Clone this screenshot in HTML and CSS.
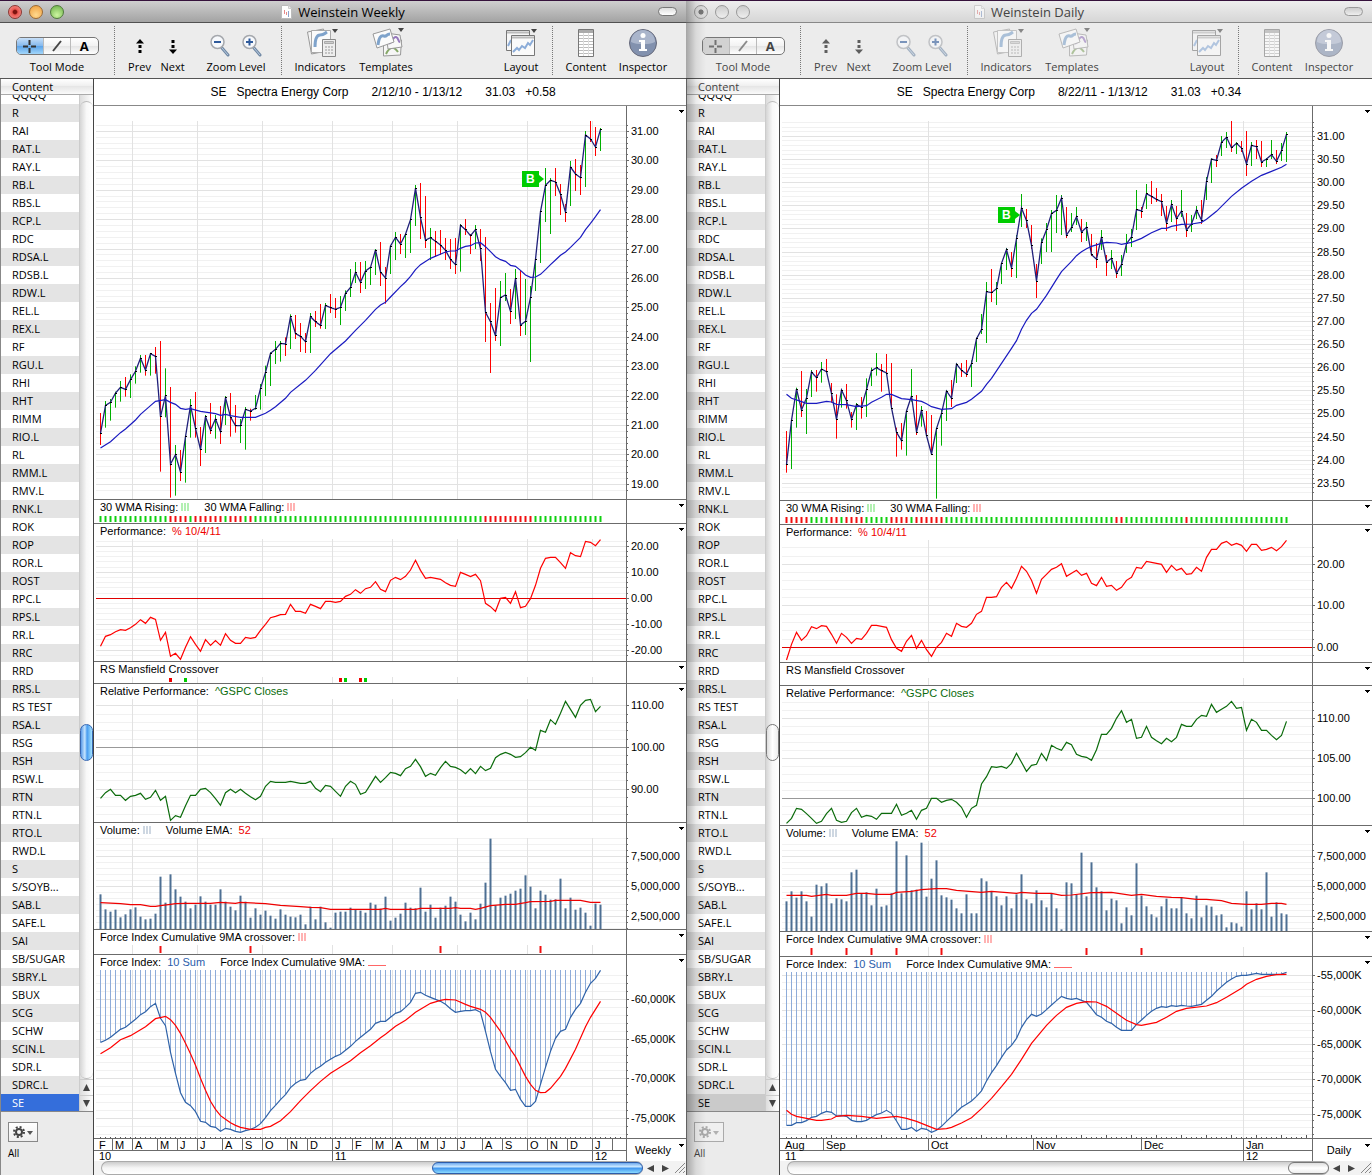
FILE: index.html
```html
<!DOCTYPE html>
<html lang="en">
  <head>
    <meta charset="UTF-8" />
    <title>Weinstein Charts</title>
    <link rel="stylesheet" href="styles.css">
  </head>
  <body>
    <main class="desktop" id="desktop"></main>

    <template id="window-template">
      <section class="window">
        <header class="titlebar">
          <div class="lights">
            <button class="light close" aria-label="Close"></button>
            <button class="light minimize" aria-label="Minimize"></button>
            <button class="light maximize" aria-label="Zoom window"></button>
          </div>
          <h1 class="title">
            <svg width="11" height="14" viewBox="0 0 11 14"><path d="M.5 .5h7l3 3v10H.5z" fill="#fff" stroke="#bbb"/><path d="M7.500 .5v3h3" fill="#eee" stroke="#ccc"/><path d="M3.500 5v4M5.500 7v3" stroke="#e58a8a"/><path d="M7.500 6v6" stroke="#8aa2cc"/></svg>
            <span class="title-text"></span>
          </h1>
          <button class="pill" aria-label="Toggle toolbar"></button>
        </header>

        <nav class="toolbar">
          <div class="tool mode">
            <div class="icons segments">
              <button class="segment active" aria-label="Crosshair"><svg width="13" height="13" viewBox="0 0 13 13"><path d="M6.500 0v5M6.500 8v5M0 6.500h5M8 6.500h5" stroke="#333" stroke-width="2"/></svg></button>
              <button class="segment" aria-label="Line"><svg width="12" height="12" viewBox="0 0 12 12"><path d="M2 11L10 1" stroke="#444" stroke-width="2"/></svg></button>
              <button class="segment letter">A</button>
            </div>
            <span>Tool Mode</span>
          </div>
          <i class="divider"></i>
          <button class="tool prev">
            <span class="icons"><svg width="10" height="15" viewBox="0 0 10 15"><path d="M1 4.500L5 0l4 4.500z"/><path d="M3.500 6h3v3h-3zM3.500 11h3v3h-3z"/></svg></span>
            <span>Prev</span>
          </button>
          <button class="tool next">
            <span class="icons"><svg width="10" height="15" viewBox="0 0 10 15"><path d="M1 10.500L5 15l4-4.500z"/><path d="M3.500 1h3v3h-3zM3.500 6h3v3h-3z"/></svg></span>
            <span>Next</span>
          </button>
          <div class="tool zoom">
            <div class="icons">
              <button aria-label="Zoom out"><svg width="20" height="23" viewBox="0 0 20 23"><path d="M12 14l6 7" stroke="#7189a5" stroke-width="3" stroke-linecap="round"/><path d="M12 14l6 7" stroke="#b9cbe0"/><circle cx="7.500" cy="8" r="6.500" fill="#f7f9fc" stroke="#a5a8ad" stroke-width="1.500"/><path d="M4 8h7" stroke="#2f5b9c" stroke-width="2"/></svg></button>
              <button aria-label="Zoom in"><svg width="20" height="23" viewBox="0 0 20 23"><path d="M12 14l6 7" stroke="#7189a5" stroke-width="3" stroke-linecap="round"/><path d="M12 14l6 7" stroke="#b9cbe0"/><circle cx="7.500" cy="8" r="6.500" fill="#f7f9fc" stroke="#a5a8ad" stroke-width="1.500"/><path d="M4 8h7M7.500 4.500v7" stroke="#2f5b9c" stroke-width="2"/></svg></button>
            </div>
            <span>Zoom Level</span>
          </div>
          <i class="divider"></i>
          <button class="tool indicators">
            <span class="icons"><svg width="32" height="32" viewBox="0 0 32 32"><path d="M1.500 5l16-3 3 22-15 3z" fill="#f5f5f5" stroke="#999"/><path d="M5.500 3.500h19v22h-19z" fill="#fbfbfb" stroke="#aaa"/><path d="M9 20c0-6 1-12 5-12s4-1 7-3" fill="none" stroke="#7fa3cb" stroke-width="3"/><path d="M16.500 12.500h13v17h-13z" fill="#eee" stroke="#888"/><path d="M18.500 14.500h9v2h-9z" fill="#ccc" stroke="#aaa"/><path d="M19 20h8M19 23h8M19 26h8" stroke="#999" stroke-dasharray="2 1"/><path d="M26 2h6l-3 4z" fill="#444"/></svg></span>
            <span>Indicators</span>
          </button>
          <button class="tool templates">
            <span class="icons"><svg width="32" height="32" viewBox="0 0 32 32"><path d="M11.500 14l18-1-1 15-17 1z" fill="#f6f6f6" stroke="#999"/><path d="M14 27c4-8 8-8 12-2" fill="none" stroke="#86a867" stroke-width="2"/><path d="M14 6l14 2 2 12-14 2z" fill="#f8f8f8" stroke="#999"/><path d="M17 16c2 2 4-7 7-6s2 5 4 5" fill="none" stroke="#9678bd" stroke-width="2"/><path d="M1 7l17-5 4 13-17 6z" fill="#fbfbfb" stroke="#999"/><path d="M6 18c1-8 3-10 6-9s2-2 6-2" fill="none" stroke="#7fa3cb" stroke-width="3"/><path d="M26 1h6l-3 4z" fill="#444"/></svg></span>
            <span>Templates</span>
          </button>
          <i class="spacer"></i>
          <button class="tool layout">
            <span class="icons"><svg width="32" height="30" viewBox="0 0 32 30"><path d="M1.500 2.500h23v20h-23z" fill="#f7f7f7" stroke="#777"/><path d="M2 4.500h22" stroke="#bbb" stroke-width="2"/><path d="M3 18l3-6" stroke="#8bacd8" stroke-width="2"/><path d="M6.500 7.500h23v20h-23z" fill="#fafafa" stroke="#777"/><path d="M7 9.500h22" stroke="#bbb" stroke-width="2"/><path d="M8 24l4-4 2 2 3-4 3 2 3-5 2 2 3-5" fill="none" stroke="#8bacd8" stroke-width="2"/><path d="M26 1h6l-3 4z" fill="#444"/></svg></span>
            <span>Layout</span>
          </button>
          <i class="divider"></i>
          <button class="tool content">
            <span class="icons"><svg width="16" height="28" viewBox="0 0 16 28"><path d="M.5 .5h15v27H.5z" fill="#fff" stroke="#777"/><path d="M1 2.500h14" stroke="#aaa" stroke-width="3"/><path d="M1 6.500h14M1 9.500h14M1 12.500h14M1 15.500h14M1 18.500h14M1 21.500h14M1 24.500h14" stroke="#bbb"/><path d="M5.500 4v23M10.500 4v23" stroke="#ddd"/></svg></span>
            <span>Content</span>
          </button>
          <button class="tool inspector">
            <span class="icons"><svg width="30" height="30" viewBox="0 0 30 30"><circle cx="15" cy="15" r="13.500" fill="#8291ae" stroke="#66697a"/><path d="M3 14a12 12 0 0 1 24 0c-6 3-18 3-24 0z" fill="#aab5cb"/><circle cx="15" cy="7.500" r="2.500" fill="#fff"/><path d="M11 12h6v9h2v2h-8v-2h2v-7h-2z" fill="#fff"/></svg></span>
            <span>Inspector</span>
          </button>
        </nav>

        <div class="body">
          <aside class="sidebar">
            <div class="sidebar-header">Content</div>
            <div class="list-area">
              <div class="symbols"></div>
              <div class="vscroll">
                <div class="vtrack"><div class="vthumb"></div></div>
                <button class="arrow" aria-label="Scroll up"><svg width="7" height="7"><path d="M0 7L3.500 0 7 7z" fill="#444"/></svg></button>
                <button class="arrow" aria-label="Scroll down"><svg width="7" height="7"><path d="M0 0h7L3.500 7z" fill="#444"/></svg></button>
              </div>
            </div>
            <div class="sidebar-footer">
              <button class="gear" aria-label="Actions">
                <svg width="20" height="12" viewBox="0 0 20 12"><circle cx="6" cy="6" r="3" fill="none" stroke="#444" stroke-width="2"/><circle cx="6" cy="6" r="5" fill="none" stroke="#444" stroke-width="2" stroke-dasharray="2 1.930"/><path d="M14 5h6l-3 4z" fill="#555"/></svg>
              </button>
              <div class="all">All</div>
            </div>
          </aside>

          <div class="chart">
            <div class="quote"></div>
            <div class="panels"></div>
            <div class="dates">
              <div class="date-rows">
                <div class="months"></div>
                <div class="years"></div>
              </div>
              <button class="period">
                <span class="period-text"></span>
                <svg width="5" height="3"><path d="M0 0h5v1h-1v1h-1v1h-1v-1h-1v-1h-1z"/></svg>
              </button>
            </div>
            <div class="hscroll">
              <div class="htrack"><div class="hthumb"></div></div>
              <button class="arrow" aria-label="Scroll left"><svg width="7" height="7"><path d="M7 0v7L0 3.500z" fill="#444"/></svg></button>
              <button class="arrow" aria-label="Scroll right"><svg width="7" height="7"><path d="M0 0v7l7-3.500z" fill="#444"/></svg></button>
              <svg class="grip" width="13" height="13"><path d="M2 12L12 2M6 12l6-6M10 12l2-2" stroke="#888"/></svg>
            </div>
          </div>
        </div>
      </section>
    </template>

    <script src="data.js"></script>
    <script src="charts.js"></script>
  </body>
</html>
```

FILE: styles.css
```css
* {
  box-sizing: border-box;
}
body {
  margin: 0;
  background: #fff;
  font-family: "Open Sans", sans-serif;
  font-size: 11px;
  color: #000;
}
button {
  padding: 0;
  border: 0;
  background: none;
  font: inherit;
  color: inherit;
}
svg {
  display: block;
}
.desktop {
  display: grid;
  grid-template-columns: 1fr 1fr;
}
.window {
  position: relative;
  border-top: 1px solid #35113b;
  min-width: 0;
}

/* title bar */
.titlebar {
  display: flex;
  align-items: center;
  height: 22px;
  padding: 0 9px 0 8px;
  background: linear-gradient(#cfcfcf, #a3a3a3);
  border-bottom: 1px solid #515151;
}
.lights {
  display: flex;
  gap: 7px;
  width: 68px;
}
.light {
  width: 14px;
  height: 14px;
  border-radius: 50%;
  border: 1px solid #777;
}
.close {
  background: radial-gradient(circle, #7c1410 20%, #ea5650 35%, #f4a29c);
  border-color: #8b3632;
}
.minimize {
  background: radial-gradient(circle at 50% 75%, #ffd98e, #ee9b3a);
  border-color: #9b6a35;
}
.maximize {
  background: radial-gradient(circle at 50% 75%, #ccf5a0, #68ae45);
  border-color: #4f7a3b;
}
.title {
  flex: 1;
  display: flex;
  justify-content: center;
  align-items: center;
  gap: 6px;
  margin: 0;
  font-size: 13px;
  font-weight: normal;
}
.pill {
  width: 19px;
  height: 9px;
  margin-left: 48px;
  border: 1px solid #777;
  border-radius: 5px;
  background: linear-gradient(#ddd, #fff);
}

/* toolbar */
.toolbar {
  display: flex;
  height: 56px;
  padding: 3px 17px 3px 15px;
  background: #ececec;
  border-bottom: 1px solid #555;
}
.tool {
  display: flex;
  flex-direction: column;
  align-items: center;
  line-height: 16px;
  white-space: nowrap;
}
.icons {
  display: flex;
  justify-content: center;
  align-items: center;
  height: 36px;
}
.mode {
  width: 84px;
}
.segments {
  width: 83px;
  height: 21px;
  margin: 11px 0 4px;
  border: 1px solid #777;
  border-radius: 5px;
  background: linear-gradient(#fff, #f2f2f2 50%, #e4e4e4 50%, #fff);
  overflow: hidden;
}
.segment {
  flex: 1;
  display: flex;
  justify-content: center;
  align-items: center;
  height: 19px;
  border-left: 1px solid #bbb;
}
.segment.active {
  border-left: 0;
  background: linear-gradient(#cfe4fa, #7fb5ec 50%, #5ea5ea 50%, #b5e4ff);
}
.letter {
  font-size: 13px;
  font-weight: bold;
}
.divider {
  margin: 0 11px 0 12px;
  border-left: 1px dotted #777;
}
.mode + .divider {
  margin: 0 8px 0 15px;
}
.prev,
.next {
  width: 33px;
}
.prev .icons,
.next .icons {
  padding-top: 7px;
}
.zoom {
  width: 66px;
  margin-left: 14px;
}
.zoom .icons {
  gap: 12px;
  padding-top: 6px;
}
.indicators {
  width: 54px;
}
.indicators .icons,
.templates .icons {
  padding-left: 4px;
}
.templates {
  width: 56px;
  margin-left: 11px;
}
.spacer {
  flex: 1;
}
.layout {
  width: 38px;
}
.content {
  width: 44px;
}
.inspector {
  width: 52px;
  margin-left: 9px;
}

/* sidebar */
.body {
  display: flex;
}
.sidebar {
  display: flex;
  flex-direction: column;
  width: 93px;
  background: #ebebeb;
  border-left: 1px solid #888;
}
.sidebar-header {
  height: 16px;
  padding-left: 11px;
  line-height: 16px;
  background: linear-gradient(#fff, #eee 50%, #e6e6e6 50%, #fafafa);
  border-bottom: 1px solid #aaa;
}
.list-area {
  display: flex;
  border-bottom: 1px solid #888;
}
.symbols {
  flex: 1;
  overflow: hidden;
  background: #fff;
}
.symbols a {
  display: block;
  height: 18px;
  padding-left: 11px;
  line-height: 18px;
  color: #000;
  text-decoration: none;
}
.symbols a:first-child {
  margin-top: -9px;
}
.symbols a:last-child {
  height: 17px;
}
.symbols a:nth-child(even) {
  background: #e4e4e4;
}
.symbols a.selected {
  background: #346edb;
  color: #fff;
}
.vscroll {
  display: flex;
  flex-direction: column;
  width: 14px;
  background: linear-gradient(90deg, #ddd, #fff);
  border-left: 1px solid #ccc;
}
.vtrack {
  flex: 1;
  margin-top: 6px;
  padding-top: 622px;
  border: 1px solid #bbb;
  border-width: 1px 0;
  border-radius: 7px;
  background: linear-gradient(90deg, #d5d5d5, #f8f8f8 50%, #fff);
}
.vthumb {
  height: 37px;
  border: 1px solid #3767b2;
  border-radius: 7px;
  background: linear-gradient(90deg, #5c9be8, #c5e5ff 35%, #479bf0 55%, #a5e4ff);
}
.arrow {
  display: flex;
  justify-content: center;
  align-items: center;
  width: 15px;
  height: 14px;
}
.vscroll .arrow {
  width: 13px;
  height: 16px;
  border-top: 1px solid #ccc;
}
.sidebar-footer {
  padding: 10px 7px;
}
.gear {
  display: flex;
  justify-content: center;
  align-items: center;
  width: 30px;
  height: 20px;
  border: 1px solid #888;
  background: linear-gradient(#fff, #eee);
}
.all {
  margin-top: 4px;
  font-size: 10px;
  line-height: 14px;
}

/* chart column */
.chart {
  flex: 1;
  min-width: 0;
  background: #fff;
  border-left: 1px solid #444;
  font-family: "Liberation Sans", sans-serif;
}
.quote {
  display: flex;
  justify-content: center;
  gap: 10px;
  height: 27px;
  padding-right: 14px;
  border-bottom: 1px solid #888;
  font-size: 12px;
  line-height: 26px;
}
.quote .dates-range {
  margin: 0 13px;
}
.panel {
  display: flex;
  border-bottom: 1px solid #6b6b6b;
}
.plot {
  flex: 1;
  display: grid;
  min-width: 0;
}
.plot > * {
  grid-area: 1 / 1;
}
.plot svg {
  width: 100%;
  height: 100%;
}
.legend {
  z-index: 1;
  display: flex;
  align-self: start;
  gap: 15px;
  padding-left: 6px;
  line-height: 15px;
  white-space: nowrap;
}
.legend b {
  margin-left: 3px;
  font-weight: normal;
}
.legend .swatch {
  display: inline-block;
  width: 8px;
  height: 8px;
  background: repeating-linear-gradient(90deg, currentColor 0 2px, transparent 2px 3px);
  opacity: 0.3;
}
.legend .dash {
  display: inline-block;
  width: 18px;
  border-bottom: 1px solid currentColor;
  opacity: 0.6;
}
.axis {
  width: 60px;
}
.axis text {
  font-size: 11px;
}
.flag {
  fill: #fff;
  font-size: 12px;
  font-weight: bold;
}
.grid-minor {
  stroke: #f1f1f1;
}
.grid-major {
  stroke: #e2e2e2;
}

/* dates */
.dates {
  display: flex;
  height: 22px;
}
.date-rows {
  flex: 1;
  min-width: 0;
  overflow: hidden;
}
.months,
.years {
  display: flex;
  height: 12px;
  line-height: 12px;
  border-bottom: 1px solid #6b6b6b;
}
.years {
  height: 10px;
  line-height: 11px;
  border-bottom: 0;
}
.date-rows span {
  flex: none;
  padding-left: 2px;
  border-left: 1px solid #6b6b6b;
}
.date-rows span:first-child {
  padding-left: 4px;
  border-left-color: transparent;
}
.date-rows span:last-child {
  flex: 1;
}
.period {
  display: flex;
  width: 60px;
  padding: 5px 2px 0 0;
  border-left: 1px solid #6b6b6b;
}
.period-text {
  flex: 1;
  line-height: 12px;
}

/* bottom scrollbar */
.hscroll {
  display: flex;
  height: 14px;
  background: #f2f2f2;
}
.htrack {
  flex: 1;
  display: flex;
  justify-content: flex-end;
  margin-left: 7px;
  border: 1px solid #aaa;
  border-right: 0;
  border-radius: 7px;
  background: linear-gradient(#ccc, #f6f6f6 50%, #fff);
}
.hthumb {
  width: 211px;
  border: 1px solid #2d5ca9;
  border-radius: 7px;
  background: linear-gradient(#6ea9ee, #c5e5ff 35%, #479bf0 55%, #8adaff);
}

/* window in the background */
.inactive .titlebar {
  background: linear-gradient(#eee, #d6d6d6);
  border-color: #888;
}
.inactive .title-text,
.inactive .tool,
.inactive .sidebar-header,
.inactive .all {
  color: #444;
}
.inactive .titlebar svg,
.inactive .icons svg {
  opacity: 0.6;
}
.inactive .gear svg {
  opacity: 0.4;
}
.inactive .light,
.inactive .pill {
  background: linear-gradient(#ccc, #eee);
  border-color: #999;
}
.inactive .close {
  background: radial-gradient(circle, #777 25%, #ddd 35%);
}
.inactive .segment.active {
  background: #d2d2d2;
}
.inactive .gear {
  border-color: #aaa;
  background: #f0f0f0;
}
.inactive .symbols a.selected {
  background: #cacaca;
  color: #000;
}
.inactive .vthumb {
  border-color: #777;
  background: linear-gradient(90deg, #ddd, #fff 50%, #eee);
}
.inactive .hthumb {
  width: 41px;
  border-color: #777;
  background: linear-gradient(#ddd, #fff 50%, #eee);
}
/* shadow thrown by the front window */
.inactive::before {
  content: "";
  position: absolute;
  z-index: 2;
  top: 0;
  bottom: 0;
  left: 0;
  width: 20px;
  background: linear-gradient(90deg, rgba(0, 0, 0, 0.3), rgba(0, 0, 0, 0.08) 50%, transparent);
  pointer-events: none;
}
```

FILE: data.js
```js
const symbols =
  "QQQQ,R,RAI,RAT.L,RAY.L,RB.L,RBS.L,RCP.L,RDC,RDSA.L,RDSB.L,RDW.L,REL.L,REX.L,RF,RGU.L,RHI,RHT,RIMM,RIO.L,RL,RMM.L,RMV.L,RNK.L,ROK,ROP,ROR.L,ROST,RPC.L,RPS.L,RR.L,RRC,RRD,RRS.L,RS TEST,RSA.L,RSG,RSH,RSW.L,RTN,RTN.L,RTO.L,RWD.L,S,S/SOYB...,SAB.L,SAFE.L,SAI,SB/SUGAR,SBRY.L,SBUX,SCG,SCHW,SCIN.L,SDR.L,SDRC.L,SE".split(",");

// Series are vertical readings, three to a pixel, growing downwards.
// base is the reading at the top edge of the panel.
// bars: [high, low, close]   line: [bar, reading]
const weekly = {
  title: "Weinstein Weekly",
  quote: ["SE", "Spectra Energy Corp", "2/12/10 - 1/13/12", "31.03", "+0.58"],
  period: "Weekly",
  grid: [38, 103, 168, 238, 298, 363, 433, 498],
  months: [["F", 18], ["M", 20], ["A", 25], ["M", 20], ["J", 20], ["J", 25], ["A", 20], ["S", 20], ["O", 25], ["N", 20], ["D", 25], ["J", 20], ["F", 20], ["M", 20], ["A", 25], ["M", 20], ["J", 20], ["J", 25], ["A", 20], ["S", 25], ["O", 20], ["N", 20], ["D", 25], ["J", 20], ["", 14]],
  years: [["10", 238], ["11", 260], ["12", 34]],
  panels: [
    {
      height: 393, base: 3,
      axis: { value: 31, at: 79, gap: 88.25, step: 1, digits: 2, from: 55, to: 1165 },
      flag: [428, 65],
      bars: [[924,1020,985],[888,968,901],[882,947,892],[860,908,864],[828,890,847],[816,875,853],[808,879,824],[784,836,799],[750,803,760],[750,812,795],[744,812,746],[726,806,754],[708,1100,935],[790,937,872],[846,1178,1077],[1020,1172,1049],[1035,1128,1101],[992,1133,995],[882,998,902],[861,998,970],[966,1083,1034],[930,1044,935],[894,987,976],[930,1001,942],[903,1017,980],[873,960,878],[864,995,936],[900,983,962],[942,1014,962],[906,1034,913],[911,947,918],[870,914,910],[837,914,850],[782,873,802],[742,843,745],[708,777,733],[708,770,715],[697,753,717],[628,732,635],[630,702,686],[654,741,694],[684,744,710],[624,744,635],[618,666,650],[597,671,661],[594,672,601],[567,624,608],[579,639,613],[573,660,607],[556,618,565],[492,576,547],[471,534,502],[471,564,532],[468,552,498],[486,540,487],[432,510,435],[411,543,501],[486,596,519],[421,507,423],[381,465,397],[387,447,417],[386,459,388],[342,444,344],[240,363,250],[234,402,338],[273,429,405],[369,465,398],[378,455,409],[375,450,420],[399,465,436],[402,492,463],[399,507,479],[357,500,361],[342,390,374],[387,447,392],[360,432,374],[372,468,431],[396,711,622],[594,804,650],[549,708,692],[528,723,578],[504,588,570],[552,657,619],[492,642,520],[495,693,660],[522,690,649],[543,771,577],[462,558,463],[318,474,320],[189,351,241],[219,387,226],[189,273,231],[237,330,268],[297,351,322],[168,303,186],[162,258,207],[180,270,218],[78,246,90],[48,111,102],[66,153,126],[69,138,73]],
      lines: [{ color: "#1a1ac0", points: [[0,1029],[2,1010],[4,983],[5,972],[7,945],[8,928],[10,902],[11,889],[13,884],[14,892],[15,898],[16,910],[17,913],[18,911],[20,919],[23,926],[24,931],[25,928],[26,932],[28,937],[31,937],[33,925],[34,916],[35,905],[37,880],[38,862],[41,826],[43,796],[46,746],[49,708],[51,676],[53,646],[55,613],[56,600],[57,592],[58,576],[60,545],[61,531],[62,514],[63,494],[64,479],[66,460],[69,441],[70,438],[71,438],[72,430],[73,424],[74,422],[75,414],[76,413],[77,425],[78,440],[79,455],[80,464],[81,469],[82,481],[83,484],[84,496],[85,510],[86,517],[87,516],[88,508],[89,494],[90,479],[91,465],[92,451],[93,441],[94,427],[95,412],[96,397],[97,374],[98,355],[99,335],[100,314]] }],
    },
    { height: 23, legend: "rising", red: [14,15,16,17,19,20,21,22,23,24,26,27,28,30,77,78,79,80,81,82,83,84,85,86] },
    {
      height: 137, base: 87, legend: "performance",
      axis: { value: 20, at: 154, gap: 78, step: 10, digits: 2, from: 133, to: 495 },
      rule: [310, "#e00000"],
      lines: [{ color: "#f00", values: [454,424,419,410,404,406,398,388,374,385,367,373,436,412,484,475,493,457,425,448,469,434,451,437,451,416,436,445,445,427,430,427,406,388,368,364,359,358,328,349,349,355,328,334,341,319,319,322,319,304,298,284,295,281,277,260,283,290,256,247,254,244,225,196,226,250,247,250,253,263,271,274,232,238,245,238,257,325,335,349,310,307,325,290,338,334,311,271,220,190,187,187,203,220,173,182,185,139,142,152,134] }],
    },
    { height: 21, legend: "mansfield", marks: [[14, "#e00"], [17, "#0c0"], [48, "#e00"], [49, "#0c0"], [52, "#e00"], [53, "#0c0"]] },
    {
      height: 138, base: 567, legend: "relative",
      axis: { value: 110, at: 632, gap: 125.5, step: 10, digits: 2, from: 612, to: 978 },
      rule: [757, "#999"],
      lines: [{ color: "#0b6b0b", values: [910,893,883,901,901,916,904,901,895,913,907,886,916,904,976,962,967,932,901,901,883,880,893,911,931,893,883,893,883,895,905,914,904,874,859,862,862,862,859,862,865,865,859,880,890,871,874,889,904,874,859,868,898,892,868,844,862,848,832,835,842,821,814,793,815,844,835,841,818,799,814,817,824,836,821,836,814,827,820,788,778,772,778,787,785,773,757,766,706,712,674,688,655,619,643,667,631,616,613,650,634] }],
    },
    {
      height: 106, base: 9, legend: "volume",
      axis: { value: 7500000, at: 109, gap: 90, step: 2500000, digits: 0, from: 55, to: 325 },
      volume: [223,268,275,269,292,283,268,262,290,298,296,281,170,248,163,208,230,245,265,254,229,245,254,254,208,245,260,271,227,245,293,265,284,272,287,296,268,284,290,292,284,313,260,298,260,307,323,278,275,275,263,268,272,278,248,254,266,230,302,293,281,248,263,265,203,275,254,293,263,257,230,245,284,304,278,298,251,188,56,256,233,227,221,212,206,166,200,265,212,224,239,238,176,265,233,269,263,278,317,251,254],
      lines: [{ color: "#e00", points: [[0,248],[4,251],[6,254],[8,254],[10,259],[11,259],[12,257],[14,253],[15,251],[17,250],[22,250],[24,247],[27,250],[28,247],[33,251],[36,256],[40,260],[42,262],[44,263],[46,268],[56,268],[57,265],[58,268],[63,268],[64,265],[70,265],[71,263],[72,265],[74,265],[75,268],[76,265],[78,257],[81,253],[83,253],[85,248],[86,245],[90,244],[91,241],[96,241],[98,247],[100,247]] }],
    },
    { height: 24, legend: "crossover", crossings: [12, 30, 68, 88] },
    {
      height: 183, base: 405, legend: "force",
      axis: { value: -60000, at: 539, gap: 118.7, step: 5000, digits: 0, suffix: "K", from: 455, to: 945 },
      ticks: 4,
      hatch: true,
      lines: [
        { color: "#2f62a8", values: [667,661,652,640,628,622,610,598,584,575,560,550,595,617,697,760,818,847,857,875,904,907,919,922,934,925,928,934,937,932,928,922,911,893,872,856,839,824,803,790,781,778,760,748,739,727,718,709,703,691,679,664,652,640,628,610,604,604,592,580,575,562,547,520,517,526,532,538,544,553,566,577,574,572,572,569,577,634,695,748,769,788,811,808,838,859,859,844,793,742,694,655,634,628,592,568,550,517,490,475,451] },
        { color: "#f00", points: [[0,701],[2,683],[4,659],[6,647],[9,620],[11,596],[13,589],[14,599],[15,616],[16,640],[17,670],[18,701],[19,736],[20,775],[21,811],[22,844],[23,868],[24,887],[25,898],[26,908],[27,916],[28,922],[30,928],[32,928],[33,922],[34,919],[36,902],[38,875],[40,842],[42,812],[44,784],[46,760],[48,741],[50,722],[52,698],[54,677],[56,653],[57,643],[59,619],[61,601],[63,577],[66,550],[68,541],[69,538],[71,540],[73,553],[74,559],[76,568],[77,577],[78,592],[79,613],[80,634],[82,688],[83,710],[85,769],[86,793],[87,811],[88,818],[89,817],[90,805],[92,769],[93,745],[95,688],[97,620],[98,592],[100,544]] },
      ],
    },
  ],
};

const daily = {
  title: "Weinstein Daily",
  inactive: true,
  quote: ["SE", "Spectra Energy Corp", "8/22/11 - 1/13/12", "31.03", "+0.34"],
  period: "Daily",
  grid: [148, 463],
  months: [["Aug", 43], ["Sep", 105], ["Oct", 105], ["Nov", 108], ["Dec", 102], ["Jan", 69]],
  years: [["11", 463], ["12", 69]],
  panels: [
    {
      height: 394, base: 3,
      axis: { value: 31, at: 94, gap: 69.4, step: 0.5, digits: 2, from: 48, to: 1170 },
      flag: [218, 101],
      bars: [[978,1103,1079],[942,1092,946],[848,968,852],[798,936,915],[852,987,879],[795,876,801],[795,860,818],[771,833,792],[762,804,800],[834,893,866],[868,1001,943],[852,908,855],[837,911,887],[921,968,943],[894,975,899],[876,941,906],[820,936,854],[788,843,797],[744,812,788],[777,860,797],[747,806,804],[774,911,909],[968,1055,982],[954,1034,1007],[915,1052,918],[792,890,873],[870,990,981],[903,965,915],[918,993,992],[930,1050,1047],[969,1181,971],[913,1022,925],[855,948,858],[825,906,880],[774,834,777],[774,816,796],[765,816,807],[766,846,776],[698,771,701],[627,687,674],[531,714,560],[492,591,563],[531,600,551],[474,537,475],[429,495,434],[441,516,489],[390,519,401],[267,366,309],[312,369,347],[360,432,421],[477,579,528],[400,477,413],[354,441,374],[315,441,326],[270,384,316],[270,390,279],[306,399,390],[324,381,368],[306,360,335],[342,411,381],[351,408,367],[387,453,449],[414,489,463],[375,435,396],[450,513,471],[435,492,460],[468,519,505],[450,513,479],[387,444,416],[372,426,396],[255,375,314],[306,339,318],[237,312,266],[228,297,274],[249,291,283],[267,333,290],[303,378,354],[285,351,299],[303,378,341],[255,336,318],[324,396,375],[330,381,357],[303,342,315],[285,357,346],[216,285,229],[160,234,162],[150,186,166],[93,153,112],[81,129,97],[48,141,128],[111,147,115],[108,141,129],[78,213,177],[111,183,121],[105,162,125],[108,186,171],[159,186,162],[105,162,149],[135,177,169],[114,168,137],[81,171,88]],
      lines: [{ color: "#1a1ac0", points: [[0,868],[1,880],[3,890],[4,895],[6,895],[8,889],[9,891],[10,898],[12,899],[14,905],[16,902],[17,892],[18,884],[19,877],[20,868],[21,868],[23,881],[25,884],[27,889],[28,896],[29,905],[31,913],[33,911],[34,901],[36,892],[37,883],[39,859],[40,838],[41,820],[43,775],[45,730],[46,707],[47,673],[48,646],[49,625],[50,613],[52,571],[54,523],[55,500],[57,469],[58,452],[59,440],[60,431],[61,424],[63,415],[64,412],[66,414],[67,418],[69,412],[71,400],[73,383],[75,370],[76,370],[77,364],[79,358],[81,357],[83,352],[84,343],[86,319],[89,274],[91,250],[93,229],[95,211],[97,199],[99,187],[100,178]] }],
    },
    { height: 23, legend: "rising", red: [0,1,2,3,4,9,10,12,13,14,15,21,22,23,24,26,27,28,29,30,31,66,67,80] },
    {
      height: 137, base: 90, legend: "performance",
      axis: { value: 20, at: 208, gap: 124.5, step: 10, digits: 2, from: 150, to: 490 },
      rule: [457, "#e00000"],
      lines: [{ color: "#f00", values: [495,448,412,436,422,395,401,392,394,418,445,415,427,445,430,433,415,391,391,394,397,434,460,469,439,421,460,436,464,484,457,442,415,424,385,394,397,385,358,349,307,307,305,277,262,280,250,214,229,256,295,253,238,223,217,206,244,235,226,241,235,265,272,247,274,271,286,277,256,247,217,220,199,202,205,208,232,211,226,220,238,236,217,229,187,163,163,145,139,151,145,151,169,148,148,166,163,157,167,155,136] }],
    },
    { height: 22, legend: "mansfield", marks: [] },
    {
      height: 139, base: 573, legend: "relative",
      axis: { value: 110, at: 670, gap: 120, step: 5, digits: 2, from: 618, to: 968 },
      rule: [910, "#999"],
      lines: [{ color: "#0b6b0b", values: [985,970,940,943,956,970,985,979,956,940,976,982,979,953,940,967,961,964,973,955,955,955,928,961,955,946,973,946,940,910,910,922,916,913,922,937,967,940,931,867,845,815,817,814,820,805,775,802,829,811,808,775,796,751,760,766,742,749,778,784,787,796,764,718,718,700,670,647,682,673,730,727,694,727,737,746,730,740,727,688,694,694,673,661,664,628,652,643,634,619,640,637,706,673,682,706,706,721,734,721,679] }],
    },
    {
      height: 105, base: 18, legend: "volume",
      axis: { value: 7500000, at: 110, gap: 90, step: 2500000, digits: 0, from: 64, to: 328 },
      volume: [244,214,233,214,244,290,194,199,190,250,235,238,244,157,149,221,217,256,206,260,256,220,64,220,106,211,209,68,230,176,121,226,232,239,265,280,223,280,280,175,184,214,229,256,229,265,223,163,238,250,211,241,262,221,265,328,187,190,223,98,229,127,202,214,271,236,241,310,262,286,130,227,259,283,292,259,236,265,265,233,280,295,227,292,256,260,286,283,322,307,310,320,214,268,250,268,157,290,247,280,283],
      lines: [{ color: "#e00", points: [[0,226],[4,226],[5,229],[8,223],[9,226],[12,226],[14,220],[16,220],[18,223],[21,223],[22,217],[25,214],[27,209],[30,206],[32,206],[34,211],[39,217],[41,214],[46,220],[47,217],[50,220],[53,220],[55,226],[57,225],[61,218],[65,217],[69,226],[71,223],[74,229],[77,232],[79,233],[82,238],[84,238],[87,242],[89,250],[92,253],[95,253],[97,250],[99,250],[100,253]] }],
    },
    { height: 24, legend: "crossover", crossings: [5, 12, 17, 22, 31, 60, 71] },
    {
      height: 181, base: 411, legend: "force",
      axis: { value: -55000, at: 466, gap: 104, step: 5000, digits: 0, suffix: "K", from: 458, to: 945 },
      ticks: 5,
      hatch: true,
      lines: [
        { color: "#2f62a8", values: [916,916,908,908,902,892,889,880,874,877,888,887,889,901,905,905,901,892,884,879,871,880,903,928,928,922,934,925,928,937,931,919,904,890,876,862,853,843,829,813,783,758,737,712,690,676,655,622,599,583,589,582,569,555,542,529,535,538,535,541,547,565,584,592,604,610,622,631,631,631,613,600,586,574,565,560,562,557,559,556,558,559,556,553,541,529,513,500,487,477,469,466,466,463,460,463,463,463,463,462,457] },
        { color: "#f00", points: [[0,871],[1,883],[2,889],[4,895],[6,901],[7,901],[9,897],[10,889],[12,886],[15,889],[18,895],[20,892],[22,889],[24,895],[26,904],[28,916],[30,928],[32,926],[33,922],[35,909],[37,893],[39,866],[41,835],[43,800],[45,763],[47,718],[49,670],[52,616],[54,586],[56,562],[58,550],[60,545],[62,546],[64,559],[66,580],[68,601],[70,614],[71,616],[74,607],[76,592],[78,574],[80,565],[84,558],[86,548],[88,532],[91,505],[92,493],[94,478],[96,469],[98,464],[100,463]] },
      ],
    },
  ],
};
```

FILE: charts.js
```js
const BARS = 101;
const TOP = 15; // room for the legend
const barX = (i) => 6.5 + 5 * i;

const swatch = (color) => `<i class="swatch" style="color:${color}"></i>`;
const legends = {
  rising: `<span>30 WMA Rising: ${swatch("#0c0")}</span><span>30 WMA Falling: ${swatch("#f00")}</span>`,
  performance: `<span>Performance: <b style="color:#e00">% 10/4/11</b></span>`,
  mansfield: `<span>RS Mansfield Crossover</span>`,
  relative: `<span>Relative Performance: <b style="color:#0b6b0b">^GSPC Closes</b></span>`,
  volume: `<span>Volume: ${swatch("#5b7a9c")}</span><span>Volume EMA: <b style="color:#e00">52</b></span>`,
  crossover: `<span>Force Index Cumulative 9MA crossover: ${swatch("#f00")}</span>`,
  force: `<span>Force Index: <b style="color:#2a5cab">10 Sum</b></span><span>Force Index Cumulative 9MA: <i class="dash" style="color:#f00"></i></span>`,
};

const line = (x1, y1, x2, y2, extra) =>
  `<line x1="${x1}" y1="${y1}" x2="${x2}" y2="${y2}" ${extra}/>`;

// every minor and major step of an axis, as [y, label or null]
const axisSteps = (panel) => {
  const a = panel.axis;
  const steps = [];
  if (!a) return steps;
  for (let k = -20; k < 100; k++) {
    const reading = a.at + (k * a.gap) / 5;
    if (reading < a.from || reading > a.to) continue;
    const y = Math.floor((reading - panel.base) / 3) + 0.5;
    let label = null;
    if (k % 5 === 0) {
      const value = a.value - (k / 5) * a.step;
      label =
        value.toLocaleString("en-US", {
          minimumFractionDigits: a.digits,
          maximumFractionDigits: a.digits,
        }) + (a.suffix || "");
    }
    steps.push([y, label]);
  }
  return steps;
};

const drawPlot = (panel, grid) => {
  const h = panel.height;
  const y = (v) => (v - panel.base) / 3;
  let out = "";

  axisSteps(panel).forEach(([at, label]) => {
    out += line(2, at, "100%", at, `class="${label ? "grid-major" : "grid-minor"}"`);
  });
  if (!panel.red) {
    grid.forEach((x) => {
      out += line(x + 0.5, TOP, x + 0.5, h, 'class="grid-major"');
    });
  }
  if (panel.rule) {
    const at = Math.floor(y(panel.rule[0])) + 0.5;
    out += line(2, at, "100%", at, `stroke="${panel.rule[1]}"`);
  }
  if (panel.red) {
    for (let i = 0; i < BARS; i++) {
      const color = panel.red.includes(i) ? "#f01010" : "#10d010";
      out += line(barX(i), 16, barX(i), 22, `stroke="${color}" stroke-width="2"`);
    }
  }
  (panel.marks || []).forEach(([i, color]) => {
    out += line(barX(i), 16, barX(i), 20, `stroke="${color}" stroke-width="3"`);
  });
  (panel.crossings || []).forEach((i) => {
    out += line(barX(i), 16, barX(i), 23, 'stroke="#f01010" stroke-width="2"');
  });
  (panel.volume || []).forEach((v, i) => {
    out += line(barX(i), y(v), barX(i), h, 'stroke="#4d6f93" stroke-width="2"');
  });
  if (panel.hatch) {
    panel.lines[0].values.forEach((v, i) => {
      out += line(barX(i), TOP, barX(i), y(v), 'stroke="#8eacd9"');
    });
  }
  (panel.bars || []).forEach(([high, low, close], i, all) => {
    const down = i === 0 || close > all[i - 1][2];
    out += line(barX(i), y(high), barX(i), y(low), `stroke="${down ? "#f00" : "#00b000"}"`);
  });
  if (panel.bars) {
    const points = panel.bars.map((b, i) => barX(i) + "," + y(b[2])).join(" ");
    out += `<polyline points="${points}" fill="none" stroke="#20207a" stroke-width="1.3"/>`;
    panel.bars.forEach((b, i) => {
      const at = Math.floor(y(b[2])) + 0.5;
      out += line(barX(i) - 0.5, at, barX(i) + 1.5, at, 'stroke="#000"');
    });
  }
  (panel.lines || []).forEach((l) => {
    const pairs = l.points || l.values.map((v, i) => [i, v]);
    const points = pairs.map(([i, v]) => barX(i) + "," + y(v)).join(" ");
    out += `<polyline points="${points}" fill="none" stroke="${l.color}" stroke-width="1.2"/>`;
  });
  if (panel.flag) {
    const [fx, fy] = panel.flag;
    out += `<path d="M${fx} ${fy}h17v4l5 4-5 4v4h-17z" fill="#0c0"/>`;
    out += `<text class="flag" x="${fx + 4}" y="${fy + 12}">B</text>`;
  }
  if (panel.ticks) {
    for (let i = 0; i < 105; i++) {
      const size = i % panel.ticks === 4 ? 3 : 1;
      out += line(barX(i), h - size, barX(i), h, 'stroke="#555"');
    }
  }
  return out;
};

const drawAxis = (panel) => {
  let out = line(0.5, 0, 0.5, panel.height, 'stroke="#6b6b6b"');
  out += '<path d="M53 4h5v1h-1v1h-1v1h-1v-1h-1v-1h-1z"/>';
  axisSteps(panel).forEach(([at, label]) => {
    out += line(1, at, label ? 3 : 2, at, 'stroke="#6b6b6b"');
    if (label) out += `<text x="5" y="${at + 3.5}">${label}</text>`;
  });
  return out;
};

const openWindow = (data) => {
  const win = document.getElementById("window-template").content.cloneNode(true);
  const find = (selector) => win.querySelector(selector);

  if (data.inactive) find(".window").classList.add("inactive");
  find(".title-text").textContent = data.title;
  find(".period-text").textContent = data.period;

  find(".symbols").innerHTML = symbols
    .map((s) => `<a href="#"${s === "SE" ? ' class="selected"' : ""}>${s}</a>`)
    .join("");
  find(".quote").innerHTML = data.quote
    .map((q, i) => `<span${i === 2 ? ' class="dates-range"' : ""}>${q}</span>`)
    .join("");
  find(".panels").innerHTML = data.panels
    .map(
      (p) => `<div class="panel">
        <div class="plot">
          <div class="legend">${legends[p.legend] || ""}</div>
          <svg style="height:${p.height}px">${drawPlot(p, data.grid)}</svg>
        </div>
        <svg class="axis" style="height:${p.height}px">${drawAxis(p)}</svg>
      </div>`
    )
    .join("");

  const cells = (list) =>
    list.map(([text, width]) => `<span style="width:${width}px">${text}</span>`).join("");
  find(".months").innerHTML = cells(data.months);
  find(".years").innerHTML = cells(data.years);

  document.getElementById("desktop").appendChild(win);
};

openWindow(weekly);
openWindow(daily);
```
